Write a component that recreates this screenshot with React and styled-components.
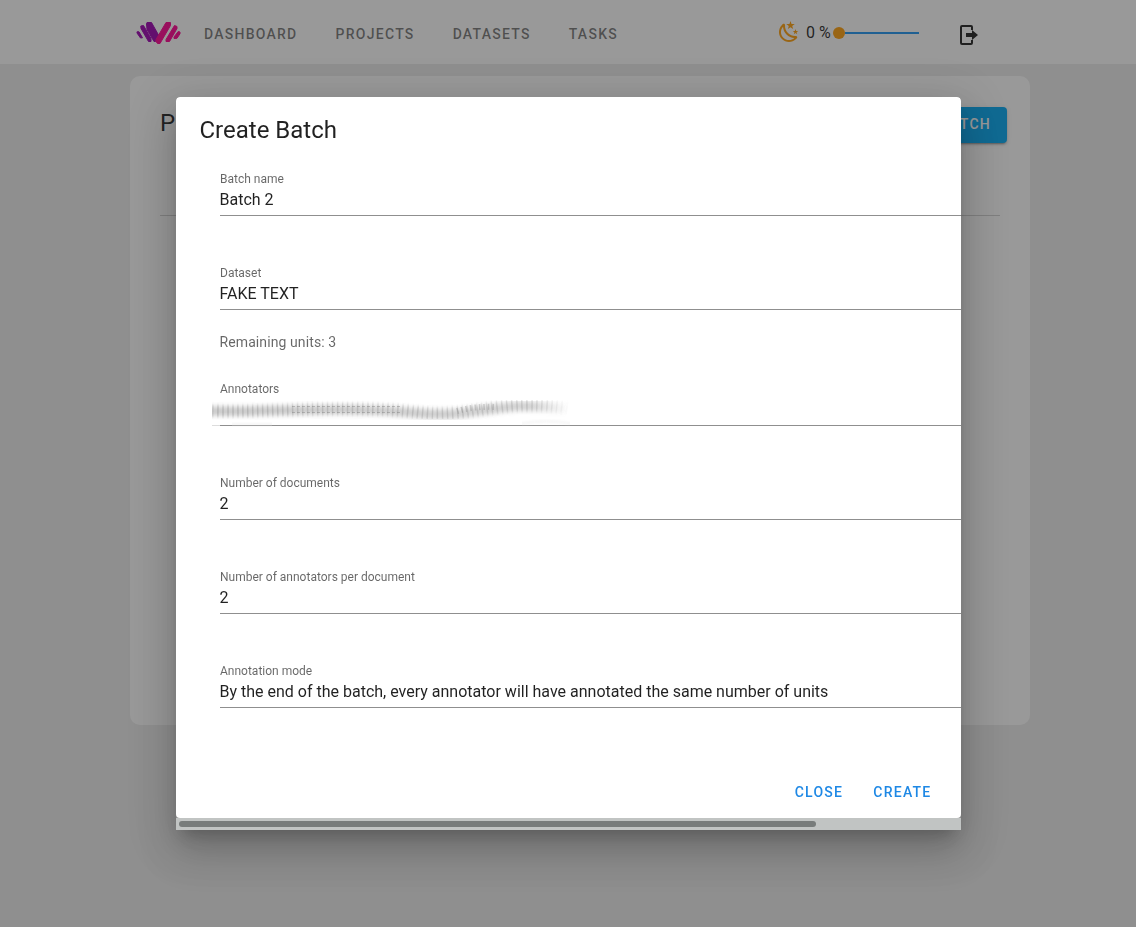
import React from 'react';
import styled, { createGlobalStyle } from 'styled-components';

const GlobalStyle = createGlobalStyle`
  * { box-sizing: border-box; }
  body { margin: 0; font-family: Roboto, "Liberation Sans", sans-serif; color: rgba(0,0,0,.87); overflow: hidden; }
`;

const Page = styled.div`
  height: 927px;
  background: #ededed;
`;

const AppBar = styled.header`
  height: 64px;
  background: #fff;
  display: flex;
  align-items: center;
  padding: 4px 156px 0 136px;
`;

const Logo = styled.svg`
  display: block;
  width: 45px;
  height: 24px;
  margin: -2px 23px 0 0;
`;

const Nav = styled.nav`
  display: flex;
  flex: 1;
  gap: 38.1px;
`;

const NavLink = styled.a`
  font-size: 14px;
  line-height: 20px;
  font-weight: 500;
  letter-spacing: 1.25px;
  color: rgba(0,0,0,.54);
`;

const Brightness = styled.div`
  display: flex;
  align-items: center;
  margin: -4px 40px 0 0;
  font-size: 16px;
  line-height: 24px;
`;

const Icon = styled.svg`
  display: block;
  width: ${p => p.$size}px;
  height: ${p => p.$size}px;
  fill: ${p => p.$color};
`;

const LogoutIcon = styled(Icon)`
  margin-top: 2px;
`;

const Percent = styled.span`
  margin: 1px 0 0 5px;
  width: 27px;
  white-space: nowrap;
`;

const Slider = styled.div`
  display: flex;
  align-items: center;
  width: 86px;
  margin-top: 1px;
`;

const Thumb = styled.span`
  width: 12px;
  height: 12px;
  border-radius: 50%;
  background: #ff9f0a;
`;

const Track = styled.span`
  flex: 1;
  height: 2px;
  background: #2196f3;
`;

const Card = styled.main`
  width: 900px;
  height: 649px;
  margin: 12px 0 0 130px;
  padding: 31px 23px 0 30px;
  border-radius: 10px;
  background: #fff;
`;

const CardHeader = styled.div`
  display: flex;
  justify-content: space-between;
  height: 108px;
`;

const PageTitle = styled.h1`
  margin: 0;
  font-size: 24px;
  line-height: 32px;
  font-weight: 400;
`;

const NewButton = styled.button`
  width: 120px;
  height: 36px;
  padding: 0 16px 2px;
  border: 0;
  border-radius: 4px;
  background: #03a9f4;
  color: #fff;
  font: 500 14px/34px Roboto, sans-serif;
  letter-spacing: 1.25px;
  text-align: right;
  box-shadow: 0 3px 1px -2px rgba(0,0,0,.2), 0 2px 2px rgba(0,0,0,.14), 0 1px 5px rgba(0,0,0,.12);
`;

const Rule = styled.hr`
  margin: 0 7px 0 0;
  border: 0;
  border-top: 1px solid rgba(0,0,0,.18);
`;

const Scrim = styled.div`
  position: fixed;
  inset: 0;
  background: rgba(33,33,33,.46);
`;

const Dialog = styled.section`
  position: fixed;
  left: 176px;
  top: 97px;
  width: 785px;
  height: 733px;
  border-radius: 4px 4px 0 0;
  overflow: hidden;
  box-shadow: 0 11px 15px -7px rgba(0,0,0,.2), 0 24px 38px 3px rgba(0,0,0,.14), 0 9px 46px 8px rgba(0,0,0,.12);
`;

const DialogBody = styled.div`
  height: 721px;
  background: #fff;
  border-radius: 4px;
  padding: 17px 0 0 23.500px;
`;

const DialogTitle = styled.h2`
  margin: 0 0 26px;
  font-size: 24px;
  line-height: 32px;
  font-weight: 400;
`;

const Form = styled.div`
  padding-left: 20.500px;
  height: 610px;
`;

const Field = styled.div`
  height: 44px;
  margin-bottom: ${p => p.$gap ?? 50}px;
  border-bottom: 1px solid #8f8f8f;
`;

const Label = styled.div`
  font-size: 12px;
  line-height: 14px;
  color: rgba(0,0,0,.6);
`;

const Value = styled.div`
  margin: 4px 0 0 -.5px;
  font-size: 16px;
  line-height: 20px;
`;

const Hint = styled.p`
  margin: 22px 0 30px -.5px;
  font-size: 14px;
  line-height: 20px;
  letter-spacing: .1px;
  color: rgba(0,0,0,.6);
`;

const Smudge = styled.svg`
  display: block;
  width: 366px;
  height: 32px;
  margin: 1px 0 0 -8px;
`;

const Actions = styled.footer`
  display: flex;
  justify-content: flex-end;
  gap: 30px;
  padding-right: 29.500px;
`;

const TextButton = styled.button`
  padding: 0;
  border: 0;
  background: none;
  color: #1e88e5;
  font: 500 14px/20px Roboto, sans-serif;
  letter-spacing: 1.25px;
`;

const Scrollbar = styled.div`
  height: 16px;
  margin-top: -4px;
  padding: 7px 3px 3px;
  background: linear-gradient(transparent 4px, #c1c4c3 4px);
`;

const ScrollThumb = styled.div`
  width: 637px;
  height: 6px;
  border-radius: 3px;
  background: #787c7b;
`;

const MOON = 'M17.75,4.09L15.22,6.03L16.13,9.09L13.5,7.28L10.87,9.09L11.78,6.03L9.25,4.09L12.44,4L13.5,1L14.56,4L17.75,4.09M21.25,11L19.61,12.25L20.2,14.23L18.5,13.06L16.8,14.23L17.39,12.25L15.75,11L17.81,10.95L18.5,9L19.19,10.95L21.25,11M18.97,15.95C19.8,15.87 20.69,17.05 20.16,17.8C19.84,18.25 19.5,18.67 19.08,19.07C15.17,23 8.84,23 4.94,19.07C1.03,15.17 1.03,8.83 4.94,4.93C5.34,4.53 5.76,4.17 6.21,3.85C6.96,3.32 8.14,4.21 8.06,5.04C7.79,7.9 8.75,10.87 10.95,13.06C13.14,15.26 16.1,16.22 18.97,15.95M17.33,17.97C14.5,17.81 11.7,16.64 9.53,14.5C7.36,12.31 6.2,9.5 6.04,6.68C3.23,9.82 3.34,14.64 6.35,17.66C9.37,20.67 14.19,20.78 17.33,17.97Z';

function Redacted() {
  return (
    <Smudge viewBox="0 0 366 32">
      <defs>
        <filter id="soft" x="-5%" y="-60%" width="110%" height="220%"><feGaussianBlur stdDeviation="1.2 2.4" /></filter>
        <filter id="light" x="-5%" y="-60%" width="110%" height="220%"><feGaussianBlur stdDeviation=".6 1.4" /></filter>
        <linearGradient id="fade">
          <stop offset="0" stopColor="#777" stopOpacity=".6" />
          <stop offset=".6" stopColor="#777" stopOpacity=".55" />
          <stop offset=".9" stopColor="#777" stopOpacity=".5" />
          <stop offset="1" stopColor="#777" stopOpacity=".05" />
        </linearGradient>
      </defs>
      <g fill="none" stroke="url(#fade)">
        <path d="M0 14 C50 15 90 12 150 13 S205 19 240 17 S300 4 354 12" strokeWidth="9" filter="url(#soft)" opacity=".65" />
        <path d="M0 14 C50 15 90 11 150 12 S205 18 240 16 S300 3 356 11" strokeWidth="12" strokeDasharray="1.5 3.5" filter="url(#light)" opacity=".45" />
        <path d="M80 9.500L190 9.500M80 15.500L190 15.500" strokeWidth="1" strokeDasharray="3 2" stroke="#777" opacity=".4" />
        <path d="M245 14Q262 9 285 10" strokeWidth="6" strokeDasharray="1.5 3" stroke="#777" opacity=".3" />
      </g>
      <path d="M0 28.500h8" stroke="#ddd" />
      <path d="M20 27.500H60M310 26.500Q335 22 358 26.500" fill="none" stroke="#e6e6e6" strokeWidth="1" filter="url(#light)" />
    </Smudge>
  );
}

export default function App() {
  return (
    <>
      <GlobalStyle />
      <Page>
        <AppBar>
          <Logo viewBox="0 0 45 24" strokeLinejoin="round" strokeWidth="1">
            <g fill="#9c00b0" stroke="#9c00b0">
              <path d="M1 10.800L3 10.800L6.500 16.800L4.500 17L1 12Z" />
              <path d="M4.800 5L7.500 4.500L15 17.500V20.500H12.500L5 7.500Z" />
              <path d="M11 1.500H15.500L22.800 14.500L19.500 20.500H18L11 8.500L10.500 3Z" />
            </g>
            <g fill="#ff0090" stroke="#ff0090">
              <path d="M30 1.500H34.500V4.500L24 22.500H21.500L20 20.500V18.500Z" />
              <path d="M38.500 4.500L41 5.500V7.500L33.500 20.500H30V18.500Z" />
              <path d="M42.200 10.500L44 11V12.800L41 17.300L38 17.500V16Z" />
            </g>
          </Logo>
          <Nav>
            {['DASHBOARD', 'PROJECTS', 'DATASETS', 'TASKS'].map(t => <NavLink key={t}>{t}</NavLink>)}
          </Nav>
          <Brightness>
            <Icon $size={24} $color="#ff9f0a" viewBox="0 0 24 24"><path d={MOON} /></Icon>
            <Percent>0 %</Percent>
            <Slider><Thumb /><Track /></Slider>
          </Brightness>
          <LogoutIcon $size={21} $color="rgba(0,0,0,.87)" viewBox="0 0 21 21">
            <path d="M2 0H12Q14 0 14 2V5H12V2H3V18H12V15H14V18Q14 20 12 20H3Q1 20 1 18V2Q1 0 3 0Z" />
            <path d="M7 8H13V5L19 10L13 15V12H7Z" />
          </LogoutIcon>
        </AppBar>
        <Card>
          <CardHeader>
            <PageTitle>P</PageTitle>
            <NewButton>TCH</NewButton>
          </CardHeader>
          <Rule />
        </Card>
      </Page>
      <Scrim />
      <Dialog>
        <DialogBody>
          <DialogTitle>Create Batch</DialogTitle>
          <Form>
            <Field><Label>Batch name</Label><Value>Batch 2</Value></Field>
            <Field $gap={0}><Label>Dataset</Label><Value>FAKE TEXT</Value></Field>
            <Hint>Remaining units: 3</Hint>
            <Field><Label>Annotators</Label><Redacted /></Field>
            <Field><Label>Number of documents</Label><Value>2</Value></Field>
            <Field><Label>Number of annotators per document</Label><Value>2</Value></Field>
            <Field><Label>Annotation mode</Label><Value>By the end of the batch, every annotator will have annotated the same number of units</Value></Field>
          </Form>
          <Actions><TextButton>CLOSE</TextButton><TextButton>CREATE</TextButton></Actions>
        </DialogBody>
        <Scrollbar><ScrollThumb /></Scrollbar>
      </Dialog>
    </>
  );
}
